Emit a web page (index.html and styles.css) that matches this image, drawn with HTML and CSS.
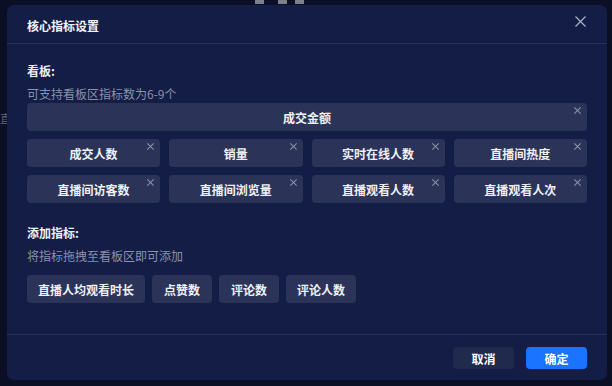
FILE: index.html
```html
<!DOCTYPE html>
<html lang="zh">
<head>
<meta charset="utf-8">
<link rel="stylesheet" href="styles.css">
</head>
<body>
<div class="backdrop">
  <div class="bg-mark m1"></div>
  <div class="bg-mark m2"></div>
  <div class="bg-mark m3"></div>
  <div class="bg-char">直</div>
  <div class="modal">
    <div class="modal-header">
      <span class="modal-title">核心指标设置</span>
      <span class="modal-close">
        <svg width="11" height="11" viewBox="0 0 11 11"><path d="M0.5 0.5 L10.5 10.5 M10.5 0.5 L0.5 10.5" stroke="#a9aec2" stroke-width="1.3" fill="none"/></svg>
      </span>
    </div>
    <div class="modal-body">
      <div class="section-title">看板:</div>
      <div class="section-desc">可支持看板区指标数为6-9个</div>
      <div class="board">
        <div class="tile tile-wide">成交金额<span class="tile-x"></span></div>
        <div class="tile">成交人数<span class="tile-x"></span></div>
        <div class="tile">销量<span class="tile-x"></span></div>
        <div class="tile">实时在线人数<span class="tile-x"></span></div>
        <div class="tile">直播间热度<span class="tile-x"></span></div>
        <div class="tile">直播间访客数<span class="tile-x"></span></div>
        <div class="tile">直播间浏览量<span class="tile-x"></span></div>
        <div class="tile">直播观看人数<span class="tile-x"></span></div>
        <div class="tile">直播观看人次<span class="tile-x"></span></div>
      </div>
      <div class="section-title second">添加指标:</div>
      <div class="section-desc">将指标拖拽至看板区即可添加</div>
      <div class="pool">
        <div class="chip">直播人均观看时长</div>
        <div class="chip">点赞数</div>
        <div class="chip">评论数</div>
        <div class="chip">评论人数</div>
      </div>
    </div>
    <div class="modal-footer">
      <button class="btn btn-cancel">取消</button>
      <button class="btn btn-ok">确定</button>
    </div>
  </div>
</div>
</body>
</html>
```
FILE: styles.css
```css
html, body {
  margin: 0;
  padding: 0;
  width: 612px;
  height: 386px;
  overflow: hidden;
  background: #0b0f26;
  font-family: "Noto Sans CJK SC", "Noto Sans", sans-serif;
}
.backdrop {
  position: relative;
  width: 612px;
  height: 386px;
  padding: 5px 0 0 7px;
  box-sizing: border-box;
}
.bg-mark {
  position: absolute;
  top: 0;
  width: 9px;
  height: 4px;
  background: #7d808b;
}
.m1 { left: 255px; }
.m2 { left: 278px; }
.m3 { left: 295px; }
.bg-char {
  position: absolute;
  left: 0;
  top: 110px;
  width: 7px;
  overflow: hidden;
  font-size: 11px;
  color: #5f6478;
}
.modal {
  position: relative;
  width: 600px;
  height: 375px;
  background: #131d46;
  border-radius: 7px;
  display: flex;
  flex-direction: column;
}
.modal-header {
  height: 38px;
  border-bottom: 1px solid #283259;
  display: flex;
  justify-content: space-between;
  align-items: flex-start;
  padding: 0 20px;
  box-sizing: content-box;
}
.modal-title {
  margin-top: 12px;
  font-size: 12px;
  line-height: 18px;
  font-weight: 700;
  color: #f2f4fa;
}
.modal-close {
  margin-top: 11px;
  margin-right: 1px;
  width: 11px;
  height: 11px;
  display: flex;
}
.modal-body {
  flex: 1;
  padding: 18px 20px 0 20px;
}
.section-title {
  font-size: 12px;
  line-height: 18px;
  font-weight: 700;
  color: #eef0f7;
}
.section-title.second {
  margin-top: 21px;
}
.section-desc {
  margin-top: 5px;
  font-size: 12px;
  line-height: 18px;
  color: #8a91ab;
}
.board {
  display: grid;
  grid-template-columns: repeat(4, 1fr);
  column-gap: 9px;
  row-gap: 8px;
}
.tile {
  position: relative;
  height: 28px;
  border-radius: 4px;
  background: #2b3458;
  color: #eef0f7;
  font-size: 12px;
  font-weight: 700;
  display: flex;
  align-items: center;
  justify-content: center;
}
.tile-wide {
  grid-column: 1 / 5;
}
.tile-x {
  position: absolute;
  right: 6px;
  top: 4px;
  width: 7px;
  height: 7px;
}
.tile-x::before, .tile-x::after {
  content: "";
  position: absolute;
  left: -1px;
  top: 3px;
  width: 9px;
  height: 1px;
  background: #8d93ab;
  transform: rotate(45deg);
}
.tile-x::after {
  transform: rotate(-45deg);
}
.pool {
  margin-top: 10px;
  display: flex;
  gap: 7px;
}
.chip {
  height: 28px;
  min-width: 60px;
  box-sizing: border-box;
  padding: 0 11px;
  border-radius: 4px;
  background: #2b3458;
  color: #eef0f7;
  font-size: 12px;
  font-weight: 700;
  display: flex;
  align-items: center;
  justify-content: center;
}
.modal-footer {
  height: 46px;
  border-top: 1px solid #283259;
  display: flex;
  justify-content: flex-end;
  align-items: flex-start;
  gap: 12px;
  padding: 12px 20px 0 0;
  box-sizing: border-box;
}
.btn {
  width: 61px;
  height: 22px;
  border: none;
  border-radius: 4px;
  font-family: inherit;
  font-size: 12px;
  font-weight: 700;
  color: #ffffff;
  padding: 0;
  display: flex;
  align-items: center;
  justify-content: center;
}
.btn-cancel {
  background: #1f2a4d;
}
.btn-ok {
  background: #1a74ff;
}
```
